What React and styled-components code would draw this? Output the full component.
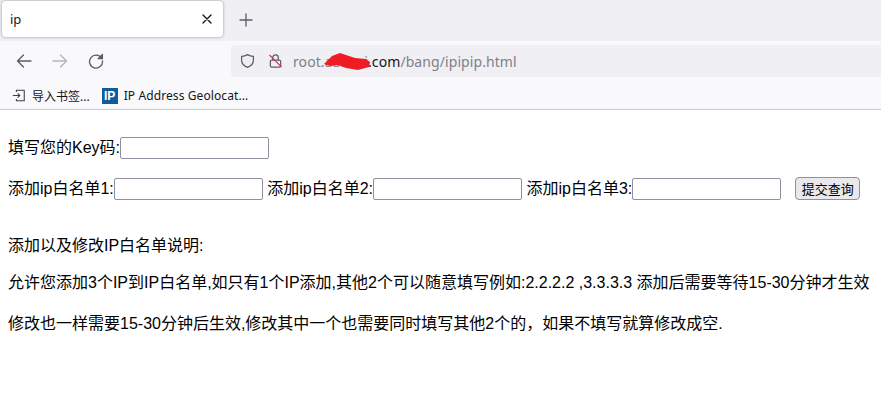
import React from "react";
import styled, { createGlobalStyle } from "styled-components";

const Global = createGlobalStyle`
  html, body { margin: 0; padding: 0; background: #fff; }
  body { width: 881px; height: 408px; overflow: hidden; font-family: "Liberation Sans", "Noto Sans CJK SC", sans-serif; }
`;
const ui = `"Noto Sans", "Noto Sans CJK SC", sans-serif`;

const Browser = styled.header`
  display: flex; flex-direction: column; height: 110px; box-sizing: border-box;
  border-bottom: 1px solid #ccc; background: #f9f9fb;
`;
const TabStrip = styled.div`
  display: flex; align-items: flex-start; height: 41px; padding: 1px 0 0 2px;
  box-sizing: border-box; background: #f0f0f4; gap: 13px;
`;
const Tab = styled.div`
  display: flex; align-items: center; justify-content: space-between;
  width: 221px; height: 36px; box-sizing: border-box; padding: 0 10px 0 8px;
  background: #fff; border-radius: 4px; box-shadow: 0 0 3px rgba(0,0,0,.4);
  font: 13px ${ui}; color: #15141a;
`;
const PlainIcon = styled.button`
  display: flex; align-items: center; justify-content: center; padding: 0;
  border: 0; background: none; color: ${p => p.$color || "#5b5b66"}; width: ${p => p.$w || 20}px; height: 20px;
`;
const NewTab = styled(PlainIcon)`margin-top: 9px;`;
const NavBar = styled.div`
  display: flex; align-items: center; height: 40px; padding-left: 14px; box-sizing: border-box;
`;
const NavButtons = styled.div`display: flex; align-items: center; gap: 16px; width: 217px;`;
const UrlBar = styled.div`
  display: flex; align-items: center; width: 650px; height: 32px; box-sizing: border-box;
  padding-left: 9px; background: #f0f0f4; border-radius: 4px 0 0 4px;
  font: 14px ${ui}; color: #7f7f8a;
`;
const UrlIcons = styled.div`display: flex; align-items: center; gap: 13px; width: 53px;`;
const UrlText = styled.span`position: relative; white-space: pre; letter-spacing: .08px;`;
const Domain = styled.span`color: #15141a;`;
const Scribble = styled.svg`position: absolute; left: 30px; top: -1px;`;
const BookmarkBar = styled.div`
  display: flex; align-items: center; gap: 12px; height: 28px; padding: 1px 0 0 12px; box-sizing: border-box;
  font: 12px ${ui}; color: #15141a;
`;
const Bookmark = styled.div`display: flex; align-items: center; gap: 6px; white-space: nowrap;`;
const BookmarkLabel = styled.span`letter-spacing: ${p => p.$track || 0}px;`;
const Favicon = styled.span`
  display: flex; align-items: center; justify-content: center; width: 16px; height: 16px;
  background: #0f5c9c; color: #fff; font: bold 12px "Liberation Sans", sans-serif;
`;

const Page = styled.main`
  padding: 27px 8px 0; font-size: 16px; line-height: 22px; color: #000;
`;
const Row = styled.div`
  display: flex; align-items: center; height: 22px; margin-bottom: ${p => p.$mb}px; white-space: pre;
`;
const Field = styled.input`
  width: 149px; height: 22px; box-sizing: border-box; padding: 1px 2px; margin: 0;
  border: 1px solid #8f8f9d; border-radius: 2px; background: #fff;
`;
const Submit = styled.button`
  width: 65px; height: 23px; margin: -1px 0 0 14px; padding: 0; box-sizing: border-box;
  border: 1px solid #8f8f9d; border-radius: 4px; background: #e9e9ed;
  font: 13px "Liberation Sans", "Noto Sans CJK SC", sans-serif; color: #000;
`;
const Note = styled.p`margin: 0 0 ${p => p.$mb}px; white-space: nowrap;`;

const stroke = { fill: "none", stroke: "currentColor", strokeWidth: 1.3, strokeLinecap: "round", strokeLinejoin: "round" };

export default function App() {
  return (
    <>
      <Global />
      <Browser>
        <TabStrip>
          <Tab>
            <span>ip</span>
            <PlainIcon $color="#15141a" $w={12}>
              <svg width="10" height="10" viewBox="0 0 10 10" {...stroke}><path d="M1 1l8 8M9 1l-8 8" /></svg>
            </PlainIcon>
          </Tab>
          <NewTab>
            <svg width="14" height="14" viewBox="0 0 14 14" {...stroke}><path d="M7 1v12M1 7h12" /></svg>
          </NewTab>
        </TabStrip>
        <NavBar>
          <NavButtons>
            <PlainIcon>
              <svg width="16" height="16" viewBox="0 0 16 16" {...stroke}><path d="M15 8H1.500M7.500 2L1.500 8l6 6" /></svg>
            </PlainIcon>
            <PlainIcon $color="#b4b4ba">
              <svg width="16" height="16" viewBox="0 0 16 16" {...stroke}><path d="M1 8h13.500M8.500 2l6 6-6 6" /></svg>
            </PlainIcon>
            <PlainIcon>
              <svg width="16" height="16" viewBox="0 0 16 16" {...stroke}><path d="M13.600 5.200A6.500 6.500 0 1 0 14.500 8" /><path d="M14.400 1.500v4.200h-4.200z" fill="currentColor" /></svg>
            </PlainIcon>
          </NavButtons>
          <UrlBar>
            <UrlIcons>
              <svg width="15" height="16" viewBox="0 0 16 16" fill="none" stroke="#5b5b66" strokeWidth="1.3" strokeLinejoin="round"><path d="M8 1.200c2 1.200 4 1.700 6.300 1.800v4.200c0 3.600-2.600 6.200-6.300 7.600C4.300 13.400 1.700 10.800 1.700 7.200V3C4 2.900 6 2.400 8 1.200z" /></svg>
              <svg width="15" height="16" viewBox="0 0 16 16" fill="none" stroke="#5b5b66" strokeWidth="1.3" strokeLinejoin="round"><rect x="2.500" y="7" width="11" height="7.500" rx="1.500" /><path d="M5 7V4.500a3 3 0 0 1 6 0V7" /><path d="M1.500 1.500l13 13" stroke="#e22850" /></svg>
            </UrlIcons>
            <UrlText>
              root.aaaaai<Domain>.com</Domain>/bang/ipipip.html
              <Scribble width="48" height="20" viewBox="0 0 48 20">
                <path d="M1 13L9 5l8-3 6 2 9 3 11 1 4 3-1 5-11 3-12-2-8-3-8 1z" fill="#ee1c25" />
              </Scribble>
            </UrlText>
          </UrlBar>
        </NavBar>
        <BookmarkBar>
          <Bookmark>
            <svg width="14" height="15" viewBox="0 0 16 16" fill="none" stroke="#3c3c44" strokeWidth="1.2" strokeLinejoin="round"><path d="M5 4V2h9v12H5v-2" /><path d="M1 8h8M6.500 5.500L9 8l-2.500 2.500" /></svg>
            <BookmarkLabel>导入书签...</BookmarkLabel>
          </Bookmark>
          <Bookmark>
            <Favicon>IP</Favicon>
            <BookmarkLabel $track={0.1}>IP Address Geolocat...</BookmarkLabel>
          </Bookmark>
        </BookmarkBar>
      </Browser>
      <Page>
        <Row $mb={19}>填写您的Key码:<Field /></Row>
        <Row $mb={35}>
          添加ip白名单1:<Field /> 添加ip白名单2:<Field /> 添加ip白名单3:<Field />
          <Submit>提交查询</Submit>
        </Row>
        <Note $mb={15}>添加以及修改IP白名单说明:</Note>
        <Note $mb={19}>允许您添加3个IP到IP白名单,如只有1个IP添加,其他2个可以随意填写例如:2.2.2.2 ,3.3.3.3 添加后需要等待15-30分钟才生效</Note>
        <Note $mb={0}>修改也一样需要15-30分钟后生效,修改其中一个也需要同时填写其他2个的，如果不填写就算修改成空.</Note>
      </Page>
    </>
  );
}
